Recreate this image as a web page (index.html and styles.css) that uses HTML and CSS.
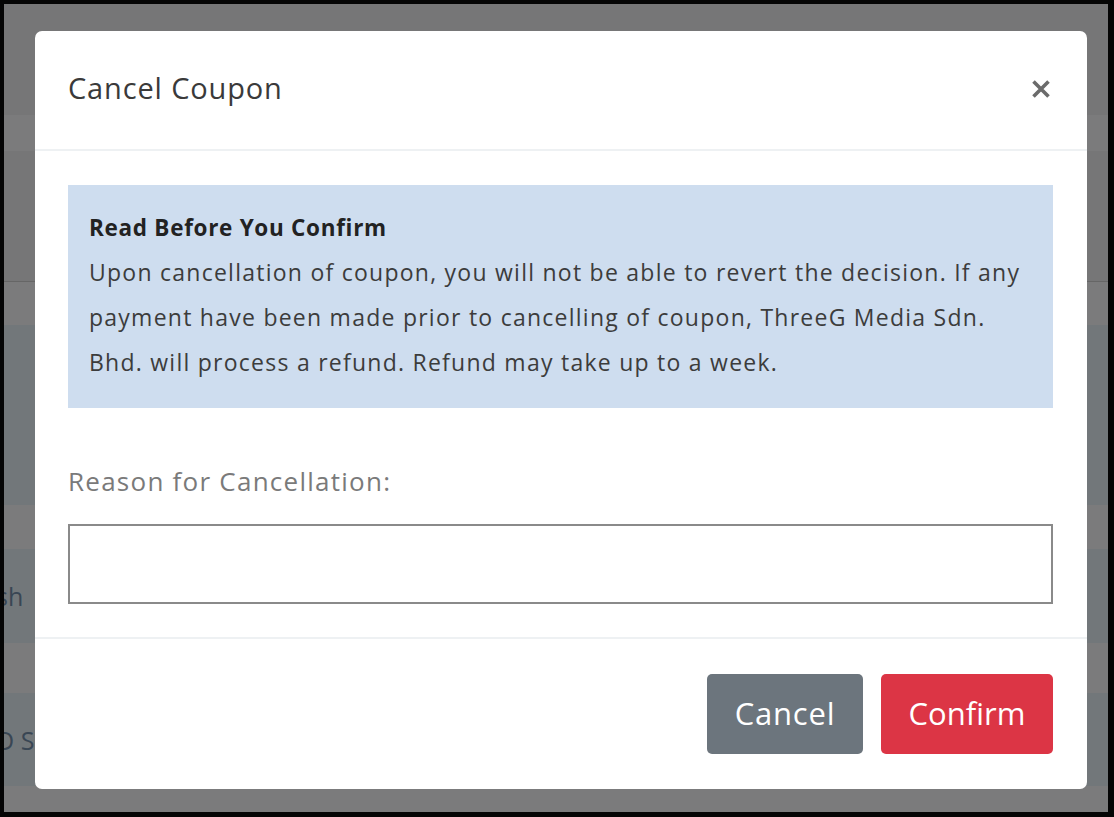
FILE: index.html
```html
<!DOCTYPE html>
<html lang="en">
<head>
<meta charset="utf-8">
<title>Cancel Coupon</title>
<link rel="stylesheet" href="styles.css">
</head>
<body>
<div class="screen">
  <div class="backdrop">
    <div class="row r-dark h111"></div>
    <div class="row r-light h36"></div>
    <div class="row r-dark h130"></div>
    <div class="row r-light h44 line-top"></div>
    <div class="row r-blue h180"></div>
    <div class="row r-light h44"></div>
    <div class="row r-blue h94"><span class="peek">sh</span></div>
    <div class="row r-light h50"></div>
    <div class="row r-blue h93"><span class="peek">D S</span></div>
    <div class="row r-light grow"></div>
  </div>

  <div class="modal" role="dialog">
    <div class="modal-header">
      <h2 class="modal-title">Cancel Coupon</h2>
      <button class="close" aria-label="Close">
        <svg width="20" height="20" viewBox="0 0 20 20"><path d="M2.5 2.5 L17.5 17.5 M17.5 2.5 L2.5 17.5" stroke="#6b6b6b" stroke-width="3.6" stroke-linecap="butt" fill="none"/></svg>
      </button>
    </div>
    <div class="modal-body">
      <div class="alert">
        <div class="alert-title">Read Before You Confirm</div>
        <div class="alert-text">Upon cancellation of coupon, you will not be able to revert the decision. If any payment have been made prior to cancelling of coupon, ThreeG Media Sdn. Bhd. will process a refund. Refund may take up to a week.</div>
      </div>
      <label class="field-label" for="reason">Reason for Cancellation:</label>
      <input class="field-input" id="reason" type="text">
    </div>
    <div class="modal-footer">
      <button class="btn btn-secondary">Cancel</button>
      <button class="btn btn-danger">Confirm</button>
    </div>
  </div>
</div>
</body>
</html>
```

FILE: styles.css
```css
* { box-sizing: border-box; }

html, body {
  margin: 0;
  height: 100%;
}

body {
  background: #050505;
  padding: 4px 6px 5px 4px;
  font-family: "Open Sans", "Liberation Sans", sans-serif;
}

.screen {
  position: relative;
  height: 100%;
  overflow: hidden;
}

.backdrop {
  display: flex;
  flex-direction: column;
  height: 100%;
}

.row {
  display: flex;
  align-items: center;
  flex-shrink: 0;
}

.r-dark { background: #767677; }
.r-light { background: #7b7b7c; }
.r-blue { background: #72777a; }
.line-top { border-top: 1px solid #666; }

.h111 { height: 111px; }
.h36 { height: 36px; }
.h130 { height: 130px; }
.h44 { height: 44px; }
.h180 { height: 180px; }
.h94 { height: 94px; }
.h50 { height: 50px; }
.h93 { height: 93px; }
.grow { flex: 1; }

.peek {
  font-family: "Open Sans", sans-serif;
  font-size: 25px;
  color: #394654;
  margin-left: -8px;
}

.modal {
  position: absolute;
  left: 31px;
  top: 27px;
  width: 1052px;
  height: 758px;
  background: #fff;
  border-radius: 7px;
  display: flex;
  flex-direction: column;
}

.modal-header {
  height: 120px;
  flex-shrink: 0;
  display: flex;
  align-items: center;
  justify-content: space-between;
  padding: 0 36px 6px 33px;
  border-bottom: 2px solid #eef1f3;
}

.modal-title {
  margin: 0;
  font-size: 29px;
  font-weight: 400;
  color: #3a3a3a;
  letter-spacing: 0.85px;
}

.close {
  border: 0;
  background: none;
  padding: 0;
  width: 20px;
  height: 20px;
  display: flex;
  margin-top: 4px;
}

.modal-body {
  flex: 1;
  padding: 34px 34px 0 33px;
  display: flex;
  flex-direction: column;
  border-bottom: 2px solid #eef1f3;
}

.alert {
  background: #ceddef;
  padding: 20px 21px 23px 21px;
  font-size: 23px;
  line-height: 45px;
  color: #3c3c3c;
  letter-spacing: 1.25px;
}

.alert-title {
  font-weight: 700;
  font-size: 22.5px;
  color: #222;
  letter-spacing: 0.7px;
}

.field-label {
  margin-top: 55px;
  font-size: 26px;
  line-height: 36px;
  color: #7a7a7a;
  letter-spacing: 1.25px;
}

.field-input {
  margin-top: 25px;
  height: 80px;
  border: 2px solid #8a8a8a;
  background: #fff;
  outline: none;
}

.modal-footer {
  height: 150px;
  flex-shrink: 0;
  display: flex;
  align-items: center;
  justify-content: flex-end;
  gap: 18px;
  padding: 0 34px 0 0;
}

.btn {
  height: 80px;
  border: 0;
  border-radius: 5px;
  color: #fff;
  font-family: "Open Sans", "Liberation Sans", sans-serif;
  font-size: 31px;
  padding: 0 0 3px;
}

.btn-secondary {
  width: 156px;
  background: #6c757d;
  letter-spacing: 0.8px;
}

.btn-danger {
  width: 172px;
  background: #dc3545;
}
```
